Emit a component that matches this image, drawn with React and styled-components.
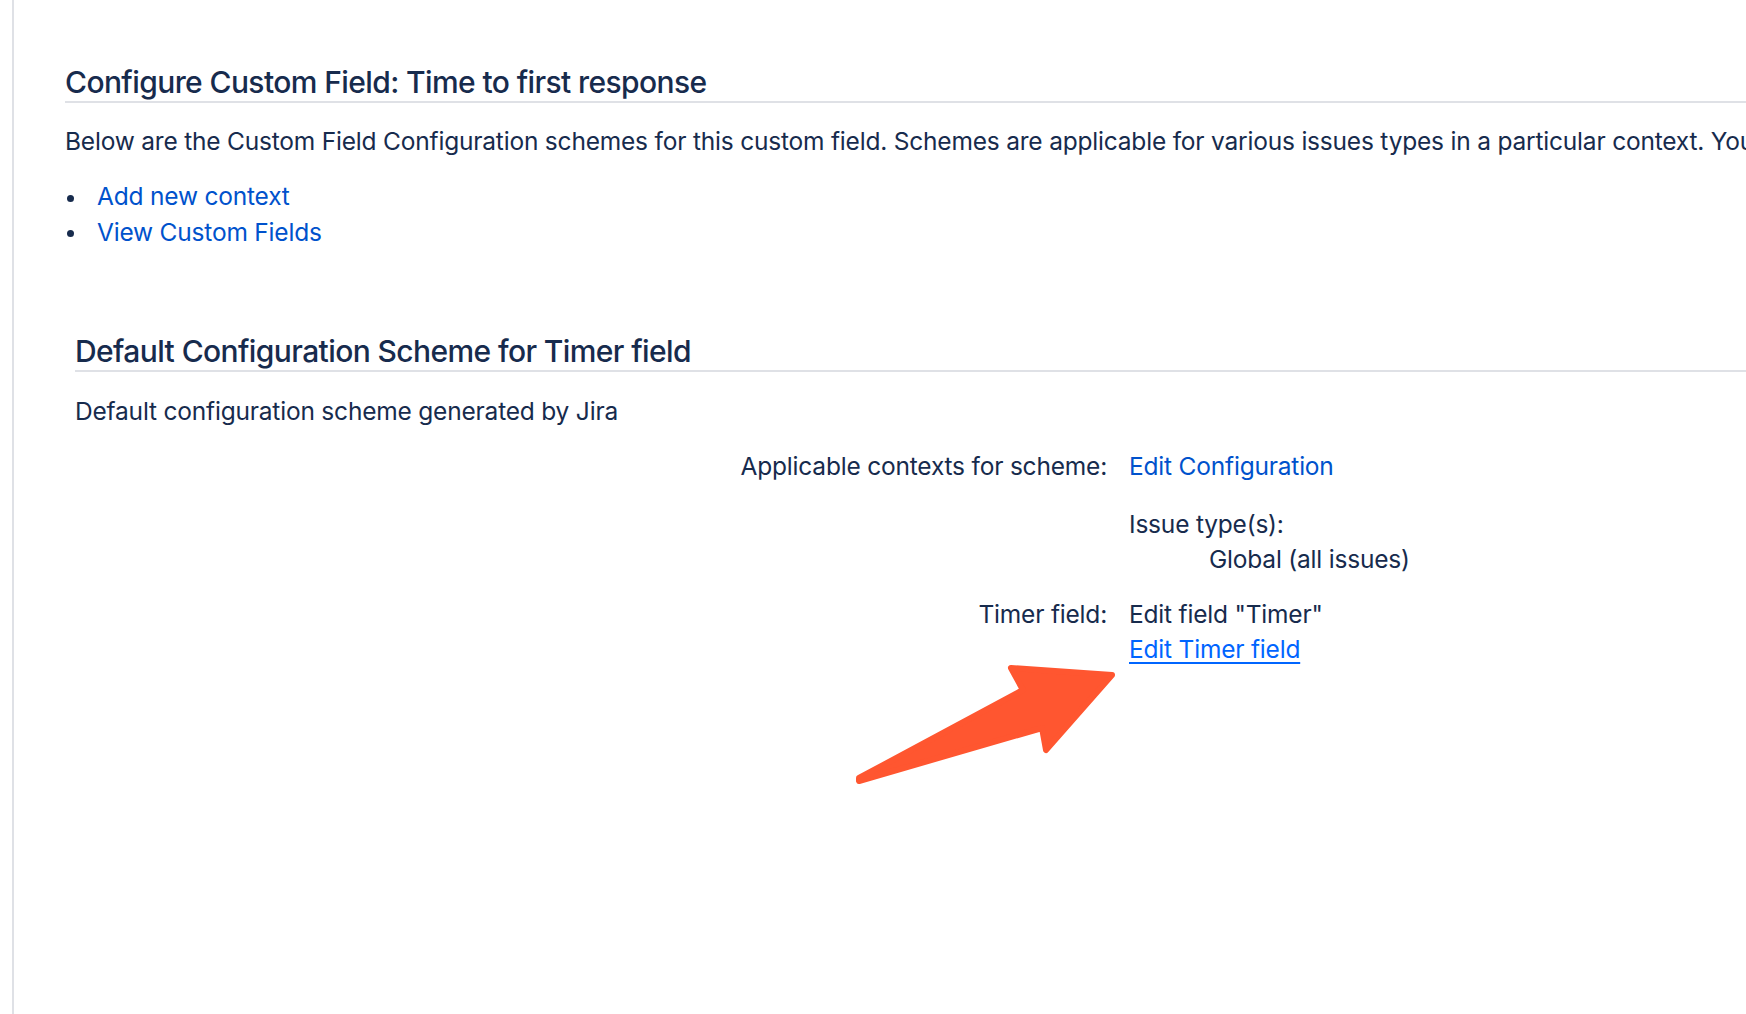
import React from "react";
import styled, { createGlobalStyle } from "styled-components";

const GlobalStyle = createGlobalStyle`
  html, body {
    margin: 0;
    padding: 0;
    background: #ffffff;
    overflow: hidden;
  }
  body {
    font-family: Inter, "Noto Sans", "Liberation Sans", sans-serif;
    color: #172b4d;
  }
`;

const Page = styled.div`
  position: relative;
  display: flex;
  width: 1746px;
  height: 1014px;
  overflow: hidden;
  padding-left: 12px;
  box-sizing: border-box;
`;

const Content = styled.main`
  flex: 1;
  border-left: 2px solid #dfe1e6;
  padding: 63px 0 0 51px;
  min-width: 0;
  font-size: 24.5px;
  letter-spacing: -0.2px;
`;

const Heading = styled.h2`
  margin: 0;
  font-size: 30px;
  line-height: 38px;
  font-weight: 500;
  letter-spacing: -0.6px;
  color: #172b4d;
  border-bottom: 2px solid #dfe1e6;
  white-space: nowrap;
`;

const Text = styled.p`
  margin: ${(p) => p.$top || 0}px 0 0;
  line-height: 35px;
  white-space: nowrap;
`;

const Links = styled.ul`
  margin: 20px 0 0;
  padding: 0;
  list-style: none;
  line-height: 35.5px;
`;

const LinkItem = styled.li`
  display: flex;
  align-items: center;

  &::before {
    content: "";
    width: 7px;
    height: 7px;
    margin: 3px 23.5px 0 1.5px;
    border-radius: 50%;
    background: #172b4d;
    flex: none;
  }
`;

const Link = styled.a`
  color: ${(p) => (p.$active ? "#0065ff" : "#0052cc")};
  text-decoration: ${(p) => (p.$active ? "underline" : "none")};
  text-underline-offset: 4px;
  text-decoration-thickness: 2px;
  cursor: pointer;
`;

const Scheme = styled.section`
  margin: 82px 0 0 10px;
`;

const SchemeTable = styled.div`
  display: grid;
  grid-template-columns: 1032px 1fr;
  column-gap: 22px;
  row-gap: 20px;
  margin-top: 20px;
  line-height: 35px;
`;

const Label = styled.div`
  text-align: right;
`;

const Value = styled.div`
  display: flex;
  flex-direction: column;
  align-items: flex-start;
`;

const SubBlock = styled.div`
  margin-top: 23px;
`;

const Indented = styled.div`
  padding-left: 80px;
`;

const Arrow = styled.svg`
  position: absolute;
  left: 840px;
  top: 650px;
  width: 290px;
  height: 140px;
  overflow: visible;
  pointer-events: none;
`;

export default function App() {
  return (
    <>
      <GlobalStyle />
      <Page>
        <Content>
          <Heading>Configure Custom Field: Time to first response</Heading>
          <Text $top={21}>
            Below are the Custom Field Configuration schemes for this custom
            field. Schemes are applicable for various issues types in a
            particular context. You can add new contexts and modify existing
            ones below.
          </Text>
          <Links>
            <LinkItem>
              <Link>Add new context</Link>
            </LinkItem>
            <LinkItem>
              <Link>View Custom Fields</Link>
            </LinkItem>
          </Links>

          <Scheme>
            <Heading>Default Configuration Scheme for Timer field</Heading>
            <Text $top={22}>Default configuration scheme generated by Jira</Text>
            <SchemeTable>
              <Label>Applicable contexts for scheme:</Label>
              <Value>
                <Link>Edit Configuration</Link>
                <SubBlock>
                  <div>Issue type(s):</div>
                  <Indented>Global (all issues)</Indented>
                </SubBlock>
              </Value>
              <Label>Timer field:</Label>
              <Value>
                <div>Edit field "Timer"</div>
                <Link $active>Edit Timer field</Link>
              </Value>
            </SchemeTable>
          </Scheme>
        </Content>

        <Arrow viewBox="0 0 290 140">
          <polygon
            points="19,128 183,40 171,18 272,25 206,100 202,78 19,131"
            fill="#ff5630"
            stroke="#ff5630"
            strokeWidth="6"
            strokeLinejoin="round"
          />
        </Arrow>
      </Page>
    </>
  );
}
